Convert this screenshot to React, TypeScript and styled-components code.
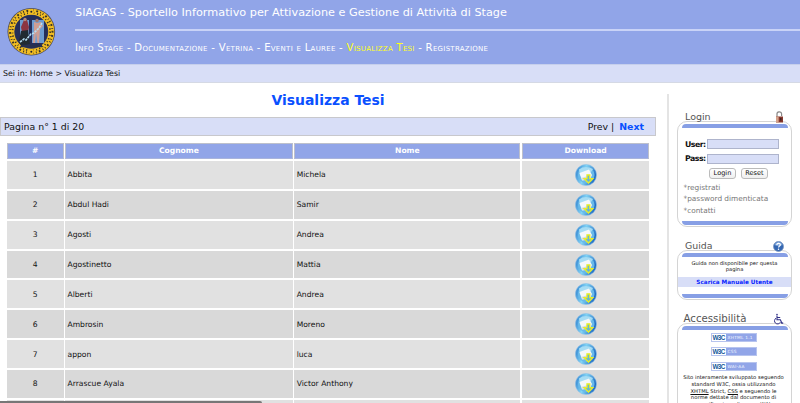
import React from "react";
import styled, { createGlobalStyle } from "styled-components";

const GlobalStyle = createGlobalStyle`
  * { box-sizing: border-box; }
  html, body { margin: 0; height: 403px; overflow: hidden; background: #fff; }
  body { font-family: "DejaVu Sans", Verdana, sans-serif; font-size: 7.6px; color: #111; }
  a { color: inherit; text-decoration: none; }
`;

const Page = styled.div`
  position: relative;
  width: 800px;
  height: 403px;
  overflow: hidden;
`;

const Header = styled.header`
  display: flex;
  height: 64px;
  background: #91a5e8;
  color: #fff;
`;

const LogoBox = styled.div`
  width: 75px;
  padding: 7px 0 0 7px;
`;

const HeaderText = styled.div`
  flex: 1;
`;

const SiteTitle = styled.div`
  height: 29px;
  line-height: 26px;
  font-size: 11.25px;
  white-space: nowrap;
`;

const Rule = styled.div`
  height: 2px;
  background: #c9d3f7;
`;

const Nav = styled.nav`
  height: 33px;
  line-height: 33px;
  font-size: 10.1px;
  letter-spacing: 0.28px;
  font-variant: small-caps;
  white-space: nowrap;
`;

const NavLink = styled.a<{ $active?: boolean }>`
  color: ${(p) => (p.$active ? "#ffff19" : "#fff")};
`;

const Breadcrumb = styled.div`
  height: 19px;
  padding-left: 3px;
  line-height: 18px;
  font-size: 7.85px;
  background: #d8def7;
  border-top: 1px solid #c6cfec;
  border-bottom: 1px solid #d5d9e4;
`;

const Columns = styled.div`
  display: flex;
`;

const Main = styled.main`
  width: 656px;
`;

const Heading = styled.h1`
  margin: 0;
  height: 34px;
  line-height: 35px;
  font-size: 13.95px;
  font-weight: bold;
  text-align: center;
  color: #0a50ff;
`;

const Pager = styled.div`
  display: flex;
  justify-content: space-between;
  height: 19px;
  padding: 0 11px 0 3px;
  line-height: 18px;
  font-size: 9.4px;
  background: #d8def7;
  border: 1px solid #c8c8cc;
`;

const Next = styled.a`
  margin-left: 2px;
  font-weight: bold;
  color: #0a50ff;
`;

const Table = styled.div`
  display: grid;
  grid-template-columns: 56.5px 227.5px 226px 127px;
  grid-template-rows: 16px;
  grid-auto-rows: 27.86px;
  gap: 2px 1.7px;
  margin: 7px 0 0 7px;
`;

const HeadCell = styled.div`
  line-height: 14px;
  text-align: center;
  font-size: 7.6px;
  font-weight: bold;
  color: #fff;
  background: #91a5e8;
  border: 1px solid #bdc0cb;
  border-bottom-color: #a9b4dc;
`;

const Cell = styled.div<{ $odd: boolean; $center?: boolean }>`
  display: flex;
  align-items: center;
  justify-content: ${(p) => (p.$center ? "center" : "flex-start")};
  padding-left: ${(p) => (p.$center ? 0 : 2.3)}px;
  background: ${(p) => (p.$odd ? "#e1e1e1" : "#d9d9d9")};
`;

const Sidebar = styled.aside`
  width: 133px;
  height: 309px;
  margin: 11px 0 0 11px;
  padding-left: 8px;
  border-left: 2px solid #e4e4e4;
`;

const Panel = styled.section<{ $top: number; $body: number }>`
  position: relative;
  padding-top: ${(p) => p.$top}px;

  > div {
    height: ${(p) => p.$body}px;
  }
`;

const PanelTitle = styled.h2<{ $size: number; $left: number }>`
  position: absolute;
  z-index: 1;
  left: ${(p) => p.$left}px;
  bottom: calc(100% - var(--base));
  margin: 0;
  padding-right: 2px;
  font-size: ${(p) => p.$size}px;
  line-height: 12px;
  font-weight: normal;
  color: #555;
`;

const PanelIcon = styled.span`
  position: absolute;
  z-index: 1;
  right: 16px;
  bottom: calc(100% - var(--base));
  line-height: 0;
`;

const PanelBody = styled.div`
  display: flex;
  flex-direction: column;
  width: 115px;
  padding-top: 2px;
  border: 1.5px solid #d4d4d4;
  border-radius: 10px;
  background: #fff;
`;

const Bar = styled.div<{ $bottom?: boolean }>`
  flex: none;
  height: 4px;
  margin: ${(p) => (p.$bottom ? "auto 3px 1px 4px" : "0 3px 0 4px")};
  background: #879fe5;
  border-radius: ${(p) => (p.$bottom ? "0 0 5px 5px" : "5px 5px 0 0")};
`;

const LoginForm = styled.div`
  padding: 11px 0 0 7px;
`;

const Field = styled.label`
  display: flex;
  align-items: center;
  height: 10px;
  margin-bottom: 4.5px;
  font-size: 7.8px;
  font-weight: bold;
`;

const FieldName = styled.span`
  width: 22px;
  letter-spacing: -0.5px;
`;

const Input = styled.input`
  width: 72px;
  height: 10px;
  padding: 0 2px;
  font-size: 7px;
  background: #d8def7;
  border: 1px solid #aeb4cc;
  outline: none;
`;

const Buttons = styled.div`
  display: flex;
  gap: 5px;
  padding-left: 24px;
`;

const Button = styled.button`
  width: 27px;
  height: 11px;
  padding: 0;
  font: 6.6px/9px "DejaVu Sans", sans-serif;
  color: #111;
  background: linear-gradient(#fff, #efefef);
  border: 1px solid #bbb;
  border-radius: 3px;
`;

const Links = styled.div`
  display: flex;
  flex-direction: column;
  margin: 2.5px 0 0 -1.5px;
  font-size: 7.35px;
  line-height: 11.5px;
  color: #777;
`;

const Help = styled.div`
  padding-top: 2.5px;
  font-size: 5.2px;
  line-height: 6.5px;
  text-align: center;
`;

const Manual = styled.a`
  height: 10px;
  margin-top: 4.5px;
  line-height: 10px;
  font-size: 5.7px;
  font-weight: bold;
  text-align: center;
  background: #d8def7;
`;

const ManualText = styled.span`
  color: #0a1eff;
`;

const Badges = styled.div`
  display: flex;
  flex-direction: column;
  align-items: center;
  gap: 5.3px;
  padding: 3px 2px 0 0;
`;

const Badge = styled.div`
  display: flex;
  width: 46px;
  height: 9px;
  border: 1px solid #b7c4ee;
`;

const W3 = styled.span`
  flex: none;
  width: 14px;
  padding-left: 1px;
  font: bold 6.3px/7px "Liberation Sans", sans-serif;
  color: #125899;
  letter-spacing: -0.6px;
`;

const BadgeLabel = styled.span`
  flex: 1;
  height: 7px;
  padding-left: 2px;
  font-size: 4.3px;
  line-height: 7px;
  letter-spacing: 0.25px;
  white-space: nowrap;
  color: #f2f5ff;
  background: #91a5e8;
`;

const Note = styled.div`
  margin: 3.5px 2px 0 0;
  font-size: 5.25px;
  line-height: 6.8px;
  text-align: center;
  white-space: nowrap;
`;

const Abbr = styled.span`
  text-decoration: underline;
  text-decoration-thickness: 0.5px;
`;

const StatusBar = styled.div`
  position: absolute;
  left: 0;
  bottom: 0;
  width: 262px;
  height: 2px;
  background: #777;
  border-radius: 0 2px 0 0;
`;

const Seal = () => (
  <svg width="49" height="49" viewBox="0 0 49 49">
    <circle cx="24.3" cy="24.7" r="23.8" fill="#4b4a58" />
    <circle cx="24.3" cy="24.7" r="20" fill="none" stroke="#f2bd22" strokeWidth="6" />
    <circle cx="24.3" cy="24.7" r="21.2" fill="none" stroke="#3a3528" strokeWidth="2" strokeDasharray="1 2.4 1.8 2.2 .8 1.9" />
    <circle cx="24.3" cy="24.7" r="18.8" fill="none" stroke="#3a3528" strokeWidth="1.8" strokeDasharray="1.2 2.1 .8 2.6" />
    <circle cx="24.3" cy="24.7" r="16.6" fill="#252e59" />
    <path d="M13 13h9v24h-9zM25 13h12v23H25z" fill="#6d9cd1" />
    <path d="M17 13h3l2 7-1 5h-6l-1-5z" fill="#8c3541" />
    <path d="M14 24l7-1 2 14-9 2-2-5z" fill="#202b32" />
    <circle cx="18" cy="12.5" r="1.7" fill="#b68a79" />
    <circle cx="30" cy="13.5" r="1.7" fill="#a5776b" />
    <path d="M27 15l3 1 4-1 2 4-3 3-1 14h-1.5L29 26l-1 10h-2l1-14z" fill="#cf9e94" />
    <path d="M13 35l4-3 2 1 5-6 3-1 5-5 3-5" fill="none" stroke="#b5def3" strokeWidth="1.6" strokeDasharray="2.4 .8" />
    <path d="M14 39h21" stroke="#26304f" strokeWidth="2.5" />
    <circle cx="24.3" cy="4.7" r="2.6" fill="#f2bd22" />
    <circle cx="24.3" cy="44.7" r="2.6" fill="#f2bd22" />
    <circle cx="24.3" cy="4.7" r="1" fill="#22232d" />
    <circle cx="24.3" cy="44.7" r="1" fill="#22232d" />
  </svg>
);

const DownloadIcon = () => (
  <svg width="22" height="22" viewBox="0 0 22 22">
    <defs>
      <linearGradient id="disc" x1="0" x2="1" y2=".3">
        <stop offset="0" stopColor="#2475ca" />
        <stop offset=".5" stopColor="#82d5f6" />
        <stop offset="1" stopColor="#236fc5" />
      </linearGradient>
    </defs>
    <circle cx="11" cy="11" r="10.6" fill="url(#disc)" stroke="#93c5e7" strokeWidth=".6" />
    <circle cx="11.2" cy="11" r="8.3" fill="#68b9e8" />
    <path d="M4 5.5Q10 1 18 5l-2 3-11 4z" fill="#a5dcf4" />
    <path d="M4.5 9l9.5-3.5 3 5.5-2 4.5-8 1z" fill="#f4f7f9" />
    <path d="M6 14l8-2.3v3.6l-6 1z" fill="#d2dbe1" />
    <path d="M12 11h2.8v3.6h3L13.5 19l-4.4-4.4H12z" fill="#68b6cf" stroke="#e8ec24" strokeWidth="1.3" />
  </svg>
);

const LockIcon = () => (
  <svg width="9" height="12" viewBox="0 0 9 12">
    <path d="M2 6V3.4a2.2 2.2 0 0 1 4.6-.6V5" fill="none" stroke="#888" strokeWidth="1.2" />
    <path d="M1 5.5h7v6H1z" fill="#85372c" />
    <path d="M1 5.5h2.7v6H1z" fill="#d5a18a" />
    <path d="M5 7h1.5v2.5H5z" fill="#432323" />
  </svg>
);

const HelpIcon = () => (
  <svg width="11" height="11" viewBox="0 0 11 11">
    <circle cx="5.5" cy="5.5" r="5" fill="#3467b2" stroke="#7894bf" strokeWidth=".8" />
    <path d="M1.5 4a4.2 4.2 0 0 1 8 0Q5 6 1.5 4z" fill="#7fa7dc" />
    <path d="M3.8 4c.1-2.2 3.6-2 3.5-.1 0 1.2-1.7 1.2-1.7 2.7" fill="none" stroke="#fff" strokeWidth="1.2" />
    <circle cx="5.5" cy="8.3" r=".75" fill="#fff" />
  </svg>
);

const WheelchairIcon = () => (
  <svg width="11" height="12" viewBox="0 0 11 12" fill="none" stroke="#303087">
    <circle cx="4" cy="1.5" r=".8" fill="#303087" stroke="none" />
    <path d="M4 2.4v4.4h3.4l1.5 3.5 1.3-.4M4.2 4.5h3" strokeWidth="1.1" />
    <path d="M3 5.2a3.1 3.1 0 1 0 4.4 4" strokeWidth="1" />
  </svg>
);

const navItems = ["Info Stage", "Documentazione", "Vetrina", "Eventi e Lauree", "Visualizza Tesi", "Registrazione"];

const rows = [
  ["Abbita", "Michela"],
  ["Abdul Hadi", "Samir"],
  ["Agosti", "Andrea"],
  ["Agostinetto", "Mattia"],
  ["Alberti", "Andrea"],
  ["Ambrosin", "Moreno"],
  ["appon", "luca"],
  ["Arrascue Ayala", "Victor Anthony"],
  ["", ""],
];

const LoginPanel = styled(Panel)`--base: 29px;`;
const GuidePanel = styled(Panel)`--base: 25px;`;
const AccessPanel = styled(Panel)`--base: 25px;`;

export default function App() {
  return (
    <Page>
      <GlobalStyle />
      <Header>
        <LogoBox><Seal /></LogoBox>
        <HeaderText>
          <SiteTitle>SIAGAS - Sportello Informativo per Attivazione e Gestione di Attività di Stage</SiteTitle>
          <Rule />
          <Nav>
            {navItems.map((item, i) => (
              <React.Fragment key={item}>
                {i > 0 && " - "}
                <NavLink $active={item === "Visualizza Tesi"}>{item}</NavLink>
              </React.Fragment>
            ))}
          </Nav>
        </HeaderText>
      </Header>
      <Breadcrumb>Sei in: Home &gt; Visualizza Tesi</Breadcrumb>
      <Columns>
        <Main>
          <Heading>Visualizza Tesi</Heading>
          <Pager>
            <span>Pagina n° 1 di 20</span>
            <span>Prev | <Next>Next</Next></span>
          </Pager>
          <Table>
            {["#", "Cognome", "Nome", "Download"].map((h) => <HeadCell key={h}>{h}</HeadCell>)}
            {rows.map(([surname, name], i) => {
              const odd = i % 2 === 0;
              return (
                <React.Fragment key={i}>
                  <Cell $odd={odd} $center>{surname && i + 1}</Cell>
                  <Cell $odd={odd}>{surname}</Cell>
                  <Cell $odd={odd}>{name}</Cell>
                  <Cell $odd={odd} $center><DownloadIcon /></Cell>
                </React.Fragment>
              );
            })}
          </Table>
        </Main>
        <Sidebar>
          <LoginPanel $top={27} $body={106}>
            <PanelTitle $size={9.5} $left={8}>Login</PanelTitle>
            <PanelIcon><LockIcon /></PanelIcon>
            <PanelBody>
              <Bar />
              <LoginForm>
                <Field><FieldName>User:</FieldName><Input /></Field>
                <Field><FieldName>Pass:</FieldName><Input /></Field>
                <Buttons><Button>Login</Button><Button>Reset</Button></Buttons>
                <Links><a>*registrati</a><a>*password dimenticata</a><a>*contatti</a></Links>
              </LoginForm>
              <Bar $bottom />
            </PanelBody>
          </LoginPanel>
          <GuidePanel $top={23} $body={50}>
            <PanelTitle $size={9.4} $left={8}>Guida</PanelTitle>
            <PanelIcon><HelpIcon /></PanelIcon>
            <PanelBody>
              <Bar />
              <Help>Guida non disponibile per questa<br />pagina</Help>
              <Manual><ManualText>Scarica Manuale Utente</ManualText></Manual>
              <Bar $bottom />
            </PanelBody>
          </GuidePanel>
          <AccessPanel $top={23} $body={110}>
            <PanelTitle $size={10.2} $left={6.5}>Accessibilità</PanelTitle>
            <PanelIcon><WheelchairIcon /></PanelIcon>
            <PanelBody>
              <Bar />
              <Badges>
                {["XHTML 1.1", "CSS", "WAI-AA"].map((b) => (
                  <Badge key={b}><W3>W3C</W3><BadgeLabel>{b}</BadgeLabel></Badge>
                ))}
              </Badges>
              <Note>
                Sito interamente sviluppato seguendo<br />
                standard W3C, ossia utilizzando<br />
                <Abbr>XHTML</Abbr> Strict, <Abbr>CSS</Abbr> e seguendo le<br />
                norme dettate dal documento di<br />
                specificazione di norme WAI
              </Note>
            </PanelBody>
          </AccessPanel>
        </Sidebar>
      </Columns>
      <StatusBar />
    </Page>
  );
}
